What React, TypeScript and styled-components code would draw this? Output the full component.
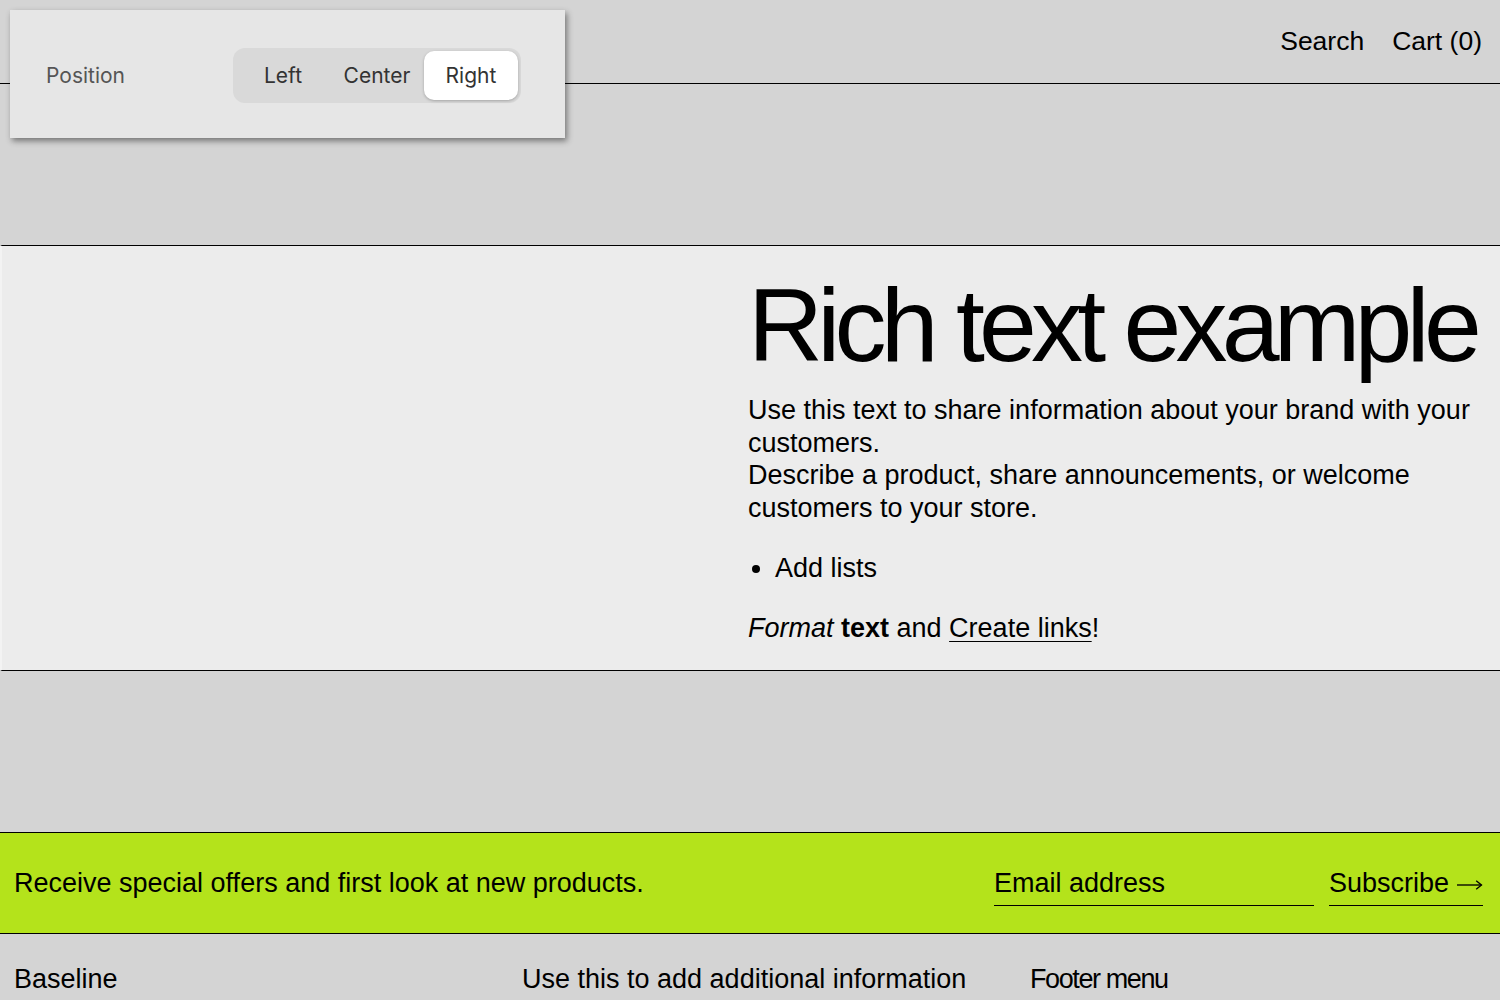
import styled, { createGlobalStyle } from 'styled-components'

const GlobalStyle = createGlobalStyle`
  * { box-sizing: border-box; }
  body {
    margin: 0;
    background: #d4d4d4;
    font-family: "Liberation Sans", Arial, sans-serif;
    color: #000;
  }
`

const ArrowIcon = () => (
  <svg width='27' height='12' viewBox='0 0 27 12' fill='none' stroke='#000' strokeWidth='1.4'>
    <path d='M0 6h25.5' />
    <path d='M20 1.5l5.5 4.5-5.5 4.5' />
  </svg>
)

const App = () => {
  return (
    <Page>
      <GlobalStyle />
      <Header>
        <NavLink>Search</NavLink>
        <NavLink>Cart (0)</NavLink>
      </Header>

      <Spacer />

      <RichSection>
        <div />
        <RichContent>
          <Heading>Rich text example</Heading>
          <Body>
            Use this text to share information about your brand with your customers.
            <br />
            Describe a product, share announcements, or welcome customers to your store.
          </Body>
          <List>
            <li>Add lists</li>
          </List>
          <Body>
            <em>Format</em> <strong>text</strong> and <Link>Create links</Link>!
          </Body>
        </RichContent>
      </RichSection>

      <Spacer />

      <Newsletter>
        <NewsText>Receive special offers and first look at new products.</NewsText>
        <Form>
          <EmailField placeholder='Email address' />
          <SubscribeButton>
            Subscribe <ArrowIcon />
          </SubscribeButton>
        </Form>
      </Newsletter>

      <Footer>
        <FooterText>Baseline</FooterText>
        <FooterText>Use this to add additional information</FooterText>
        <FooterHeading>Footer menu</FooterHeading>
      </Footer>

      {/* settings popover floating over the page */}
      <Popover>
        <PopoverLabel>Position</PopoverLabel>
        <Segmented>
          <Segment>Left</Segment>
          <Segment>Center</Segment>
          <Segment $active>Right</Segment>
        </Segmented>
      </Popover>
    </Page>
  )
}

const Page = styled.div`
  position: relative;
  min-height: 1000px;
  overflow: hidden;
`

const Header = styled.header`
  height: 84px;
  border-bottom: 1px solid #000;
  display: flex;
  justify-content: flex-end;
  align-items: flex-start;
  gap: 28px;
  padding: 25px 18px 0 0;
`

const NavLink = styled.a`
  font-size: 26.5px;
  line-height: 32px;
  cursor: pointer;
`

const Spacer = styled.div`
  height: 161px;
`

const RichSection = styled.section`
  display: grid;
  grid-template-columns: 746px 1fr;
  background: #ececec;
  border-top: 1px solid #000;
  border-bottom: 1px solid #000;
  border-left: 2px solid #f3f3f3;
  height: 426px;
`

const RichContent = styled.div`
  padding: 24px 20px 0 0;
`

const Heading = styled.h1`
  margin: 0 0 14px;
  font-size: 104px;
  line-height: 110px;
  font-weight: 400;
  letter-spacing: -5.8px;
`

const Body = styled.p`
  margin: 0;
  font-size: 27px;
  line-height: 32.5px;
`

const List = styled.ul`
  margin: 28px 0 28px;
  padding-left: 27px;
  font-size: 27px;
  line-height: 32px;
`

const Link = styled.a`
  text-decoration: underline;
  text-underline-offset: 4px;
  text-decoration-thickness: 1px;
`

const Newsletter = styled.section`
  height: 102px;
  background: #b4e31b;
  border-top: 1px solid #000;
  border-bottom: 1px solid #000;
  display: flex;
  align-items: center;
  justify-content: space-between;
  padding: 0 17px 0 14px;
`

const NewsText = styled.p`
  margin: 0;
  font-size: 27px;
`

const Form = styled.form`
  display: flex;
  gap: 15px;
  padding-top: 8px;
`

const EmailField = styled.input`
  width: 320px;
  background: transparent;
  border: none;
  border-bottom: 1px solid #000;
  padding: 0 0 6px;
  font-family: inherit;
  font-size: 27px;
  color: #000;
  outline: none;

  &::placeholder {
    color: #000;
  }
`

const SubscribeButton = styled.button`
  width: 154px;
  display: flex;
  align-items: center;
  gap: 8px;
  background: transparent;
  border: none;
  border-bottom: 1px solid #000;
  padding: 0 0 6px;
  font-family: inherit;
  font-size: 27px;
  line-height: 31px;
  color: #000;
  cursor: pointer;

  svg {
    margin-top: 2px;
  }
`

const Footer = styled.footer`
  display: grid;
  grid-template-columns: 508px 508px 1fr;
  padding: 30px 14px 0;
`

const FooterText = styled.p`
  margin: 0;
  font-size: 27px;
`

const FooterHeading = styled.h3`
  margin: 0;
  font-size: 27px;
  font-weight: 400;
  letter-spacing: -1.4px;
`

const Popover = styled.div`
  position: absolute;
  top: 10px;
  left: 10px;
  width: 555px;
  height: 128px;
  background: #e6e6e6;
  box-shadow: 2px 3px 6px rgba(0, 0, 0, 0.45);
  display: flex;
  align-items: center;
  justify-content: space-between;
  padding: 3px 44px 0 36px;
  font-family: Inter, Roboto, sans-serif;
`

const PopoverLabel = styled.span`
  font-size: 21px;
  color: #555;
`

const Segmented = styled.div`
  display: flex;
  align-items: center;
  background: #d9d9d9;
  border-radius: 12px;
  padding: 3px;
  height: 55px;
`

const Segment = styled.button<{ $active?: boolean }>`
  width: 94px;
  height: 49px;
  padding: 0;
  border: none;
  border-radius: 10px;
  font-family: inherit;
  font-size: 21px;
  color: #333;
  background: ${({ $active }) => ($active ? '#fff' : 'transparent')};
  box-shadow: ${({ $active }) => ($active ? '0 1px 3px rgba(0,0,0,0.25)' : 'none')};
  cursor: pointer;
`

export default App
